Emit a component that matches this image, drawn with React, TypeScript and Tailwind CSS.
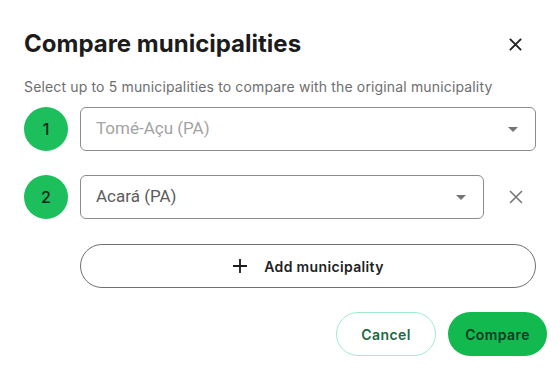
import React from "react";

const Caret: React.FC = () => (
  <svg width="10" height="5" viewBox="0 0 10 5" className="shrink-0">
    <path d="M0 0 L10 0 L5 5 Z" fill="#757575" />
  </svg>
);

const CloseIcon: React.FC<{ size: number; stroke: number; color: string }> = ({ size, stroke, color }) => (
  <svg width={size} height={size} viewBox="0 0 16 16" fill="none">
    <path d="M2 2 L14 14 M14 2 L2 14" stroke={color} strokeWidth={stroke} strokeLinecap="butt" />
  </svg>
);

const Step: React.FC<{ n: number }> = ({ n }) => (
  <div className="w-[44px] h-[44px] rounded-full bg-[#1dbf5c] flex items-center justify-center text-[16px] font-medium text-[#13261a] shrink-0">
    {n}
  </div>
);

const App: React.FC = () => {
  const rows = [
    { n: 1, label: "Tomé-Açu (PA)", placeholder: true },
    { n: 2, label: "Acará (PA)", placeholder: false },
  ];

  return (
    <div className="w-[560px] h-[368px] bg-white font-['Inter',sans-serif] overflow-hidden">
      <div className="px-6 pt-[29px]">
        <div className="flex items-center justify-between">
          <h1 className="text-[24px] font-bold text-[#1c1c1c] leading-[30px]">Compare municipalities</h1>
          <button className="mr-[13px] w-[16px] h-[16px] flex items-center justify-center">
            <CloseIcon size={15} stroke={2} color="#222" />
          </button>
        </div>
        <p className="mt-[19px] text-[14px] text-[#6e6e6e] leading-[18px] tracking-[0.15px]">
          Select up to 5 municipalities to compare with the original municipality
        </p>

        <div className="mt-[11px] flex flex-col gap-[24px]">
          {rows.map((r) => (
            <div key={r.n} className="flex items-center gap-3">
              <Step n={r.n} />
              <div
                className={
                  "h-[44px] flex items-center justify-between rounded-[6px] border border-[#8c8c8c] pl-[15px] pr-[17px] font-['Roboto',sans-serif] text-[17px] " +
                  (r.placeholder ? "w-[456px] text-[#a3a3a3]" : "w-[404px] text-[#5c5c5c]")
                }
              >
                <span>{r.label}</span>
                <Caret />
              </div>
              {!r.placeholder && (
                <button className="ml-[12px] flex items-center justify-center">
                  <CloseIcon size={16} stroke={1.6} color="#777" />
                </button>
              )}
            </div>
          ))}
        </div>

        <div className="mt-[25px] ml-[56px] w-[456px] h-[44px] rounded-full border border-[#6f6f6f] flex items-center justify-center gap-[16px]">
          <svg width="16" height="16" viewBox="0 0 16 16" fill="none">
            <path d="M8 1 V15 M1 8 H15" stroke="#1c1c1c" strokeWidth="1.8" />
          </svg>
          <span className="text-[14px] font-semibold text-[#222] tracking-[0.35px]">Add municipality</span>
        </div>

        <div className="mt-[24px] flex justify-end gap-3 -mr-[11px]">
          <button className="w-[100px] h-[44px] rounded-full border border-[#9eeccb] text-[14px] font-semibold text-[#1b6a3f] tracking-[0.4px]">
            Cancel
          </button>
          <button className="w-[99px] h-[44px] rounded-full bg-[#12b94f] text-[14px] font-semibold text-[#0f3b22] tracking-[0.4px]">
            Compare
          </button>
        </div>
      </div>
    </div>
  );
};

export default App;
